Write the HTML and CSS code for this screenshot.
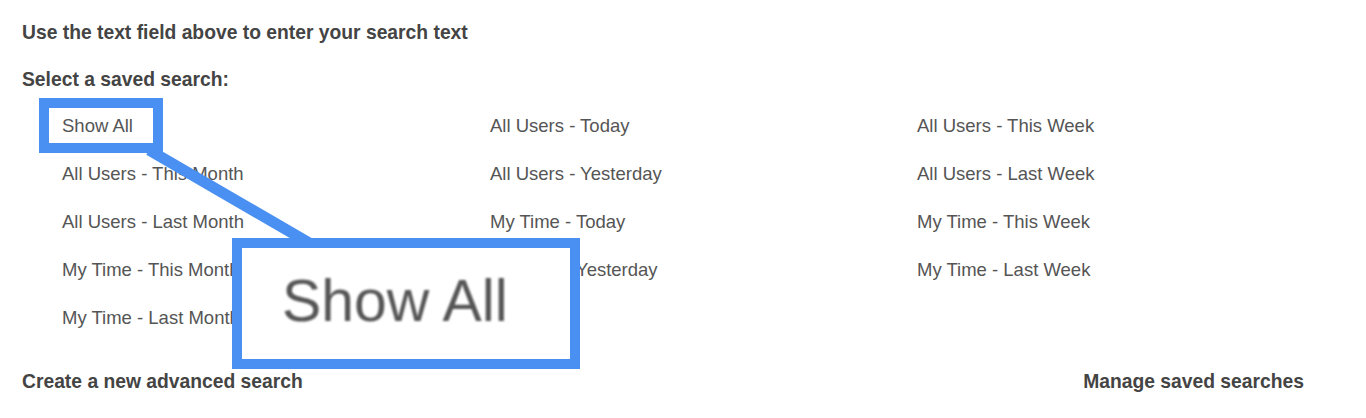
FILE: index.html
```html
<!DOCTYPE html>
<html lang="en">
<head>
<meta charset="utf-8">
<title>Saved searches</title>
<link rel="stylesheet" href="styles.css">
</head>
<body>
<div class="page">
  <p class="heading first">Use the text field above to enter your search text</p>
  <p class="heading">Select a saved search:</p>
  <div class="searches">
    <ul class="col">
      <li>Show All</li>
      <li>All Users - This Month</li>
      <li>All Users - Last Month</li>
      <li>My Time - This Month</li>
      <li>My Time - Last Month</li>
    </ul>
    <ul class="col">
      <li>All Users - Today</li>
      <li>All Users - Yesterday</li>
      <li>My Time - Today</li>
      <li>My Time - Yesterday</li>
    </ul>
    <ul class="col">
      <li>All Users - This Week</li>
      <li>All Users - Last Week</li>
      <li>My Time - This Week</li>
      <li>My Time - Last Week</li>
    </ul>
  </div>
  <div class="footer">
    <span class="heading">Create a new advanced search</span>
    <span class="heading">Manage saved searches</span>
  </div>

  <svg class="connector" width="1366" height="418" viewBox="0 0 1366 418" aria-hidden="true">
    <line x1="149" y1="150" x2="311" y2="244" stroke="#4a90f2" stroke-width="11"/>
  </svg>
  <div class="highlight"></div>
  <div class="magnifier"><span class="magnified">Show All</span></div>
</div>
</body>
</html>
```

FILE: styles.css
```css
* { box-sizing: border-box; }
html, body {
  margin: 0;
  padding: 0;
  background: #ffffff;
}
body {
  font-family: "Liberation Sans", Arial, Helvetica, sans-serif;
  width: 1366px;
  height: 418px;
  overflow: hidden;
}
.page {
  position: relative;
  width: 1366px;
  height: 418px;
  padding: 21px 62px 0 22px;
}
.heading {
  margin: 0;
  font-size: 19.3px;
  line-height: 24px;
  font-weight: bold;
  color: #444444;
}
.heading.first {
  margin-bottom: 23px;
}
.searches {
  display: grid;
  grid-template-columns: 428px 427px 1fr;
  padding-left: 40px;
  margin-top: 10px;
}
.col {
  list-style: none;
  margin: 0;
  padding: 0;
  display: flex;
  flex-direction: column;
}
.col li {
  font-size: 18.5px;
  line-height: 48px;
  color: #555555;
  white-space: nowrap;
}
.footer {
  display: flex;
  justify-content: space-between;
  margin-top: 28px;
}
.connector {
  position: absolute;
  left: 0;
  top: 0;
}
.highlight {
  position: absolute;
  left: 39px;
  top: 98px;
  width: 124px;
  height: 55px;
  border: 10px solid #4a90f2;
}
.magnifier {
  position: absolute;
  left: 232px;
  top: 238px;
  width: 348px;
  height: 131px;
  border: 10px solid #4a90f2;
  background: #ffffff;
  padding: 21px 0 0 40px;
}
.magnified {
  display: block;
  font-size: 58.9px;
  line-height: 64px;
  color: #555555;
  filter: blur(0.9px);
  white-space: nowrap;
}
```
